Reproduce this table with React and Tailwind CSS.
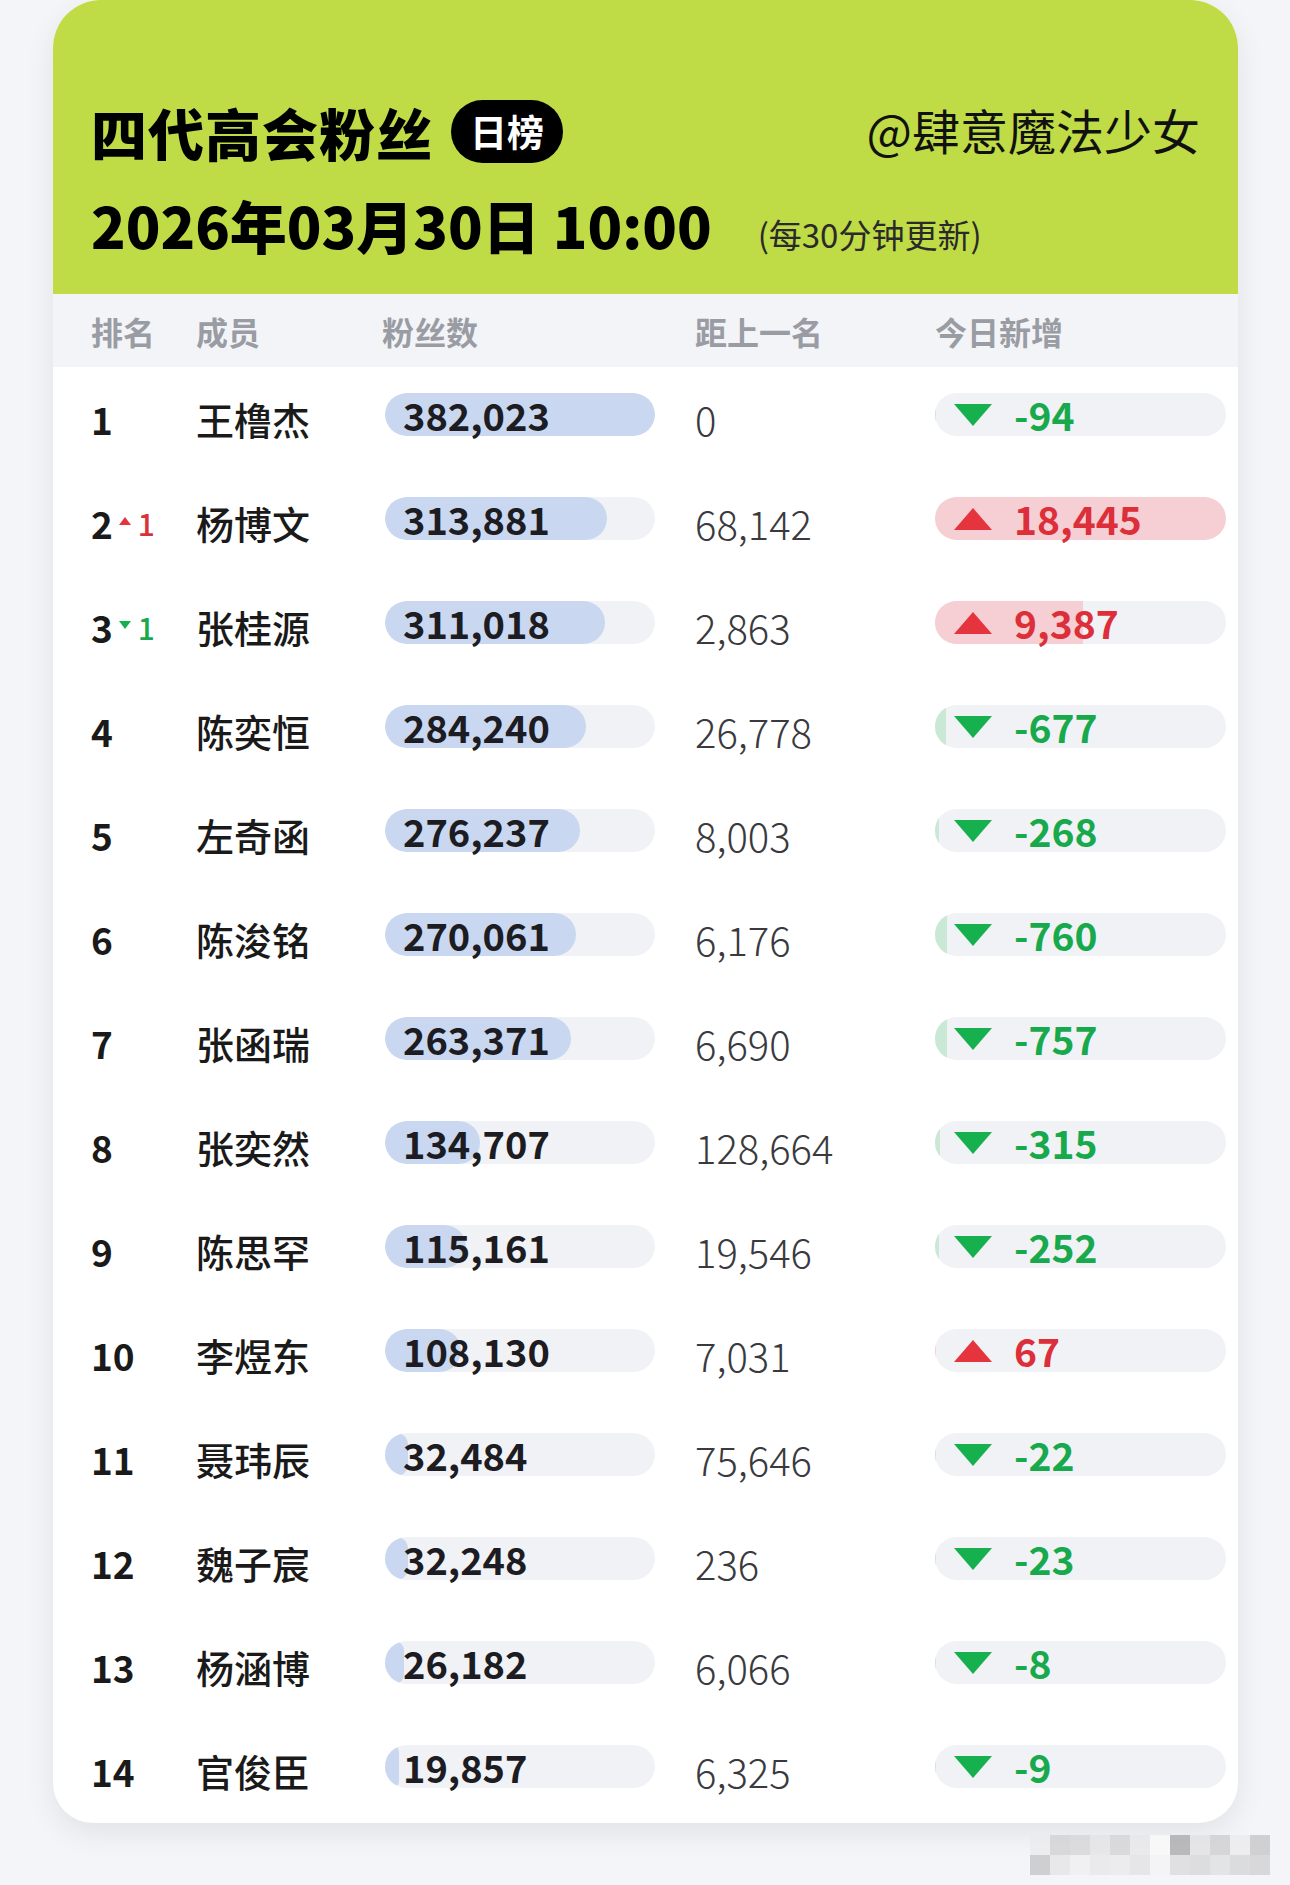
import { useMemo } from 'react'

const rows = [
  { rank: 1, name: '王橹杰', fans: 382023, gap: 0, delta: -94 },
  { rank: 2, move: 1, name: '杨博文', fans: 313881, gap: 68142, delta: 18445 },
  { rank: 3, move: -1, name: '张桂源', fans: 311018, gap: 2863, delta: 9387 },
  { rank: 4, name: '陈奕恒', fans: 284240, gap: 26778, delta: -677 },
  { rank: 5, name: '左奇函', fans: 276237, gap: 8003, delta: -268 },
  { rank: 6, name: '陈浚铭', fans: 270061, gap: 6176, delta: -760 },
  { rank: 7, name: '张函瑞', fans: 263371, gap: 6690, delta: -757 },
  { rank: 8, name: '张奕然', fans: 134707, gap: 128664, delta: -315 },
  { rank: 9, name: '陈思罕', fans: 115161, gap: 19546, delta: -252 },
  { rank: 10, name: '李煜东', fans: 108130, gap: 7031, delta: 67 },
  { rank: 11, name: '聂玮辰', fans: 32484, gap: 75646, delta: -22 },
  { rank: 12, name: '魏子宸', fans: 32248, gap: 236, delta: -23 },
  { rank: 13, name: '杨涵博', fans: 26182, gap: 6066, delta: -8 },
  { rank: 14, name: '官俊臣', fans: 19857, gap: 6325, delta: -9 },
]

const fmt = (n) => n.toLocaleString('en-US')

function Tri({ up, className }) {
  return (
    <svg viewBox="0 0 40 24" className={className}>
      {up
        ? <polygon points="20,1 39,23 1,23" fill="#e5343d" />
        : <polygon points="1,1 39,1 20,23" fill="#17b04f" />}
    </svg>
  )
}

function Row({ r, maxFans, maxDelta }) {
  const up = r.delta > 0
  return (
    <div className="grid grid-cols-[105px_186px_313px_240px_1fr] items-center h-[104px] pl-[38px]">
      <div className="flex items-center">
        <span className="text-[37px] font-bold text-[#1a1a1a] leading-none">{r.rank}</span>
        {r.move === 1 && (
          <span className="flex items-center ml-[6px] text-[#d8323c]">
            <svg viewBox="0 0 12 8" className="w-[12px] h-[8px] mb-[4px]"><polygon points="6,0 12,8 0,8" fill="#e5343d" /></svg>
            <span className="ml-[7px] text-[30px] font-medium leading-none">1</span>
          </span>
        )}
        {r.move === -1 && (
          <span className="flex items-center ml-[6px] text-[#1aa84e]">
            <svg viewBox="0 0 12 8" className="w-[12px] h-[8px] mb-[4px]"><polygon points="0,0 12,0 6,8" fill="#17b04f" /></svg>
            <span className="ml-[7px] text-[30px] font-medium leading-none">1</span>
          </span>
        )}
      </div>
      <div className="text-[38px] font-medium text-[#1a1a1a] leading-none">{r.name}</div>
      <div className="pl-[3px] mb-[9px]">
        <div className="relative w-[270px] h-[43px]">
          <div className="absolute inset-0 rounded-full bg-[#f1f2f6] overflow-hidden">
            <div className="h-full rounded-full bg-[#c9d8f0]" style={{ width: `${(r.fans / maxFans) * 100}%` }} />
          </div>
          <div className="relative h-full flex items-center pl-[18px] text-[38px] font-bold text-[#1c1c22] leading-[43px]">{fmt(r.fans)}</div>
        </div>
      </div>
      <div className="text-[40px] font-light text-[#3a3a3e] leading-none">{fmt(r.gap)}</div>
      <div className="mb-[9px]">
        <div className="relative w-[291px] h-[43px]">
          <div className="absolute inset-0 rounded-full bg-[#f1f2f5] overflow-hidden">
            <div className={`h-full ${up ? 'bg-[#f5cfd4]' : 'bg-[#c9e8d6]'}`} style={{ width: `${(Math.abs(r.delta) / maxDelta) * 100}%` }} />
          </div>
          <div className="relative h-full flex items-center pl-[18px]">
            <Tri up={up} className="w-[40px] h-[24px]" />
            <span className={`ml-[21px] text-[39px] font-bold leading-[43px] ${up ? 'text-[#dc2f39]' : 'text-[#18a94d]'}`}>{fmt(r.delta)}</span>
          </div>
        </div>
      </div>
    </div>
  )
}

export default function App() {
  const maxFans = useMemo(() => Math.max(...rows.map((r) => r.fans)), [])
  const maxDelta = useMemo(() => Math.max(...rows.map((r) => Math.abs(r.delta))), [])

  return (
    <div className="relative w-[1290px] h-[1885px] bg-[#f4f5f8] overflow-hidden" style={{ fontFamily: '"Noto Sans CJK SC", "Noto Sans", sans-serif' }}>
      <div className="ml-[53px] w-[1185px] bg-white rounded-t-[48px] rounded-b-[40px] overflow-hidden shadow-[0_10px_30px_rgba(0,0,0,0.08)]">
        {/* header */}
        <div className="h-[294px] bg-[#bfdb46] pl-[38px] pr-[38px] pt-[100px]">
          <div className="flex items-center justify-between">
            <div className="flex items-center">
              <h1 className="text-[56px] font-black text-black leading-none tracking-[1px]">四代高会粉丝</h1>
              <span className="ml-[18px] h-[63px] px-[19px] rounded-full bg-black text-white text-[37px] font-bold flex items-center leading-none">日榜</span>
            </div>
            <div className="text-[48px] text-[#111] leading-none mb-[6px]">@肆意魔法少女</div>
          </div>
          <div className="flex items-end mt-[33px]">
            <div className="text-[57px] font-black text-black leading-none">2026年03月30日 10:00</div>
            <div className="ml-[46px] mb-[2px] text-[33px] text-[#2a2a2a] leading-none">(每30分钟更新)</div>
          </div>
        </div>

        {/* column header */}
        <div className="grid grid-cols-[105px_186px_313px_240px_1fr] items-center h-[73px] pl-[38px] bg-[#f3f4f7] text-[32px] font-bold text-[#9a9ca4]">
          <div>排名</div>
          <div>成员</div>
          <div>粉丝数</div>
          <div>距上一名</div>
          <div>今日新增</div>
        </div>

        {rows.map((r) => (
          <Row key={r.rank} r={r} maxFans={maxFans} maxDelta={maxDelta} />
        ))}
      </div>

      {/* blurred watermark */}
      <div className="absolute left-[1030px] top-[1835px] flex flex-col opacity-80">
        <div className="flex">
          {['#ececee', '#d2d2d4', '#d6d6d8', '#e4e4e6', '#d4d4d6', '#e8e8ea', '#fafafa', '#ababae', '#e2e2e4', '#cfcfd1', '#ececee', '#c8c8ca'].map((c, i) => (
            <div key={i} className="w-[20px] h-[20px]" style={{ background: c }} />
          ))}
        </div>
        <div className="flex">
          {['#c6c6c8', '#e6e6e8', '#f0f0f2', '#e8e8ea', '#ebebed', '#e3e3e5', '#f4f4f6', '#dcdcde', '#d8d8da', '#e0e0e2', '#d6d6d8', '#d2d2d4'].map((c, i) => (
            <div key={i} className="w-[20px] h-[20px]" style={{ background: c }} />
          ))}
        </div>
      </div>
    </div>
  )
}
